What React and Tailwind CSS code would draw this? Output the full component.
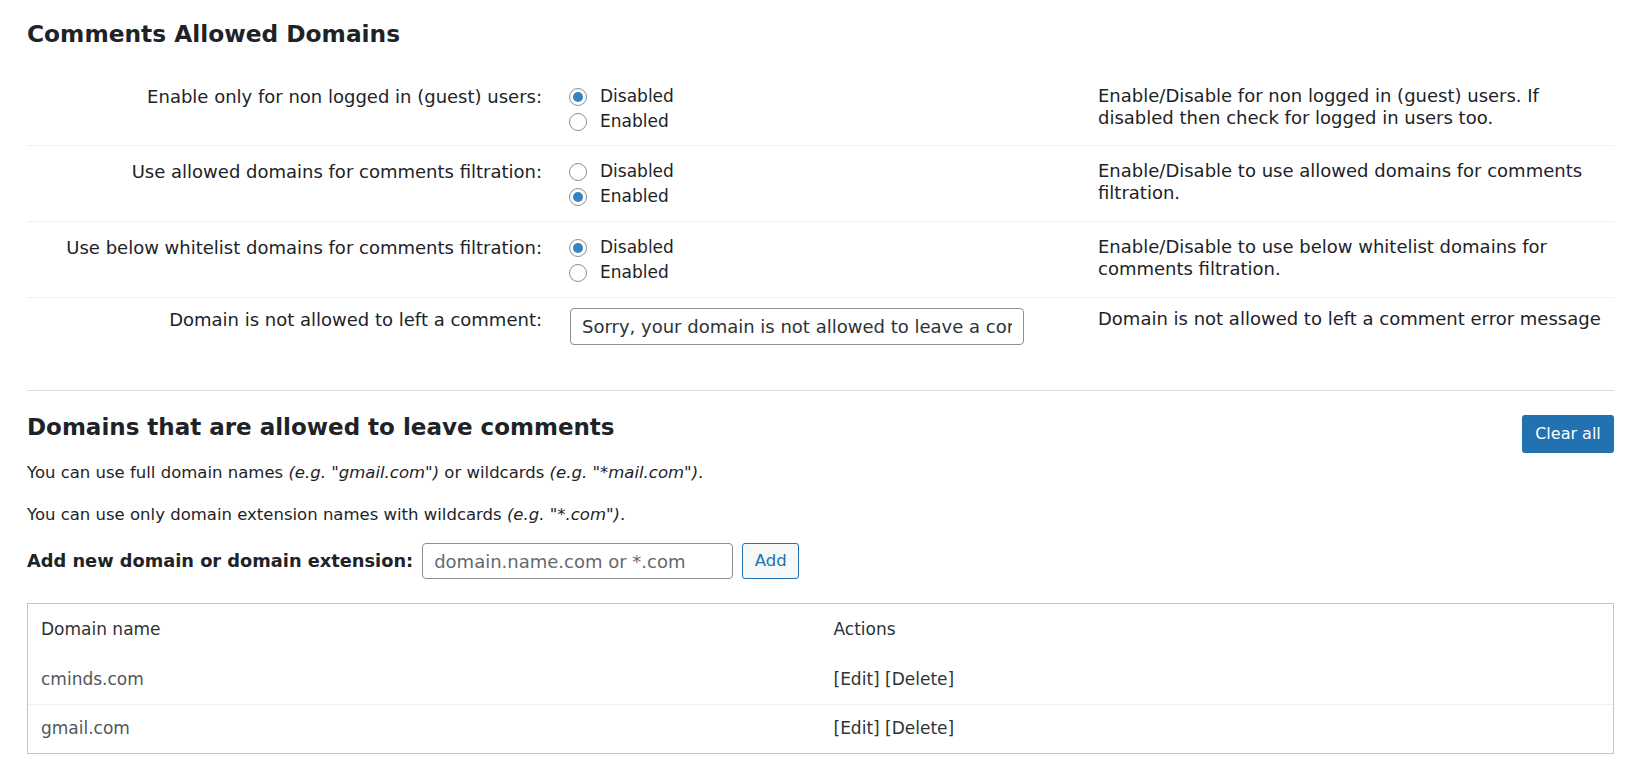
import React from "react";

const Radio = ({ checked, label }) => (
  <div className="flex items-center h-[25px]">
    <span className="w-[18px] h-[18px] rounded-full border border-[#8c8f94] bg-white flex items-center justify-center shrink-0">
      {checked && <span className="w-[10px] h-[10px] rounded-full bg-[#3582c4]" />}
    </span>
    <span className="ml-[13px] text-[17px]">{label}</span>
  </div>
);

const RadioRow = ({ label, value, desc, first }) => (
  <div className={first ? "grid grid-cols-[525px_536px_1fr] border-b border-[#f0f0f1] pt-[14px] pb-[11px]" : "grid grid-cols-[525px_536px_1fr] border-b border-[#f0f0f1] pt-[13px] pb-[12px]"}>
    <div className="text-right pr-[10px] leading-[25px]">{label}</div>
    <div className="pl-[17px]">
      <Radio checked={value === 0} label="Disabled" />
      <Radio checked={value === 1} label="Enabled" />
    </div>
    <div className="pl-[10px] leading-[22px] pt-[1px]">{desc}</div>
  </div>
);

export default function App() {
  return (
    <div className="min-h-screen bg-white pl-[27px] pr-[26px] pt-[19px] text-[18px] text-[#1d2327] font-['DejaVu_Sans',sans-serif]">
      <h2 className="text-[23.3px] font-bold leading-[30px]">Comments Allowed Domains</h2>

      <div className="mt-[21px]">
        <RadioRow
          first
          label="Enable only for non logged in (guest) users:"
          value={0}
          desc="Enable/Disable for non logged in (guest) users. If disabled then check for logged in users too."
        />
        <RadioRow
          label="Use allowed domains for comments filtration:"
          value={1}
          desc="Enable/Disable to use allowed domains for comments filtration."
        />
        <RadioRow
          label="Use below whitelist domains for comments filtration:"
          value={0}
          desc="Enable/Disable to use below whitelist domains for comments filtration."
        />
        <div className="grid grid-cols-[525px_536px_1fr] pt-[10px]">
          <div className="text-right pr-[10px] leading-[23px]">Domain is not allowed to left a comment:</div>
          <div className="pl-[18px]">
            <input
              type="text"
              readOnly
              value="Sorry, your domain is not allowed to leave a comment."
              className="w-[454px] h-[37px] border border-[#8c8f94] rounded-[4px] px-[11px] text-[18px] text-[#2c3338] bg-white outline-none"
            />
          </div>
          <div className="pl-[10px] leading-[22px]">Domain is not allowed to left a comment error message</div>
        </div>
      </div>

      <div className="mt-[45px] border-t border-[#dcdcde]" />

      <div className="mt-[21px] flex justify-between items-start">
        <h2 className="text-[23px] font-bold leading-[30px]">Domains that are allowed to leave comments</h2>
        <button className="mt-[3px] w-[92px] h-[38px] rounded-[3px] bg-[#2271b1] text-white text-[16px]">Clear all</button>
      </div>

      <p className="mt-[8px] leading-[23px] text-[16.5px]">
        You can use full domain names <em>(e.g. "gmail.com")</em> or wildcards <em>(e.g. "*mail.com")</em>.
      </p>
      <p className="mt-[19px] leading-[23px] text-[16.5px]">
        You can use only domain extension names with wildcards <em>(e.g. "*.com")</em>.
      </p>

      <div className="mt-[17px] flex items-center">
        <span className="font-bold text-[17.8px]">Add new domain or domain extension:</span>
        <input
          type="text"
          placeholder="domain.name.com or *.com"
          className="ml-[9px] w-[311px] h-[36px] border border-[#8c8f94] rounded-[4px] px-[11px] text-[18px] text-[#2c3338] placeholder:text-[#646970] bg-white outline-none"
        />
        <button className="ml-[9px] w-[57px] h-[36px] border border-[#2271b1] rounded-[3px] bg-[#f6f7f7] text-[#2271b1] text-[16.5px]">Add</button>
      </div>

      <div className="mt-[24px] border border-[#c3c4c7] text-[17px]">
        <table className="w-full table-fixed border-collapse">
          <thead>
            <tr className="h-[51px]">
              <th className="text-left font-normal pl-[13px] text-[#2c3338]">Domain name</th>
              <th className="text-left font-normal pl-[13px] text-[#2c3338]">Actions</th>
            </tr>
          </thead>
          <tbody>
            <tr className="h-[49px] border-b border-[#f0f0f1]">
              <td className="pl-[13px] text-[#50575e]">cminds.com</td>
              <td className="pl-[13px] text-[#2c3338]">[Edit] [Delete]</td>
            </tr>
            <tr className="h-[49px]">
              <td className="pl-[13px] text-[#50575e]">gmail.com</td>
              <td className="pl-[13px] text-[#2c3338]">[Edit] [Delete]</td>
            </tr>
          </tbody>
        </table>
      </div>
    </div>
  );
}
